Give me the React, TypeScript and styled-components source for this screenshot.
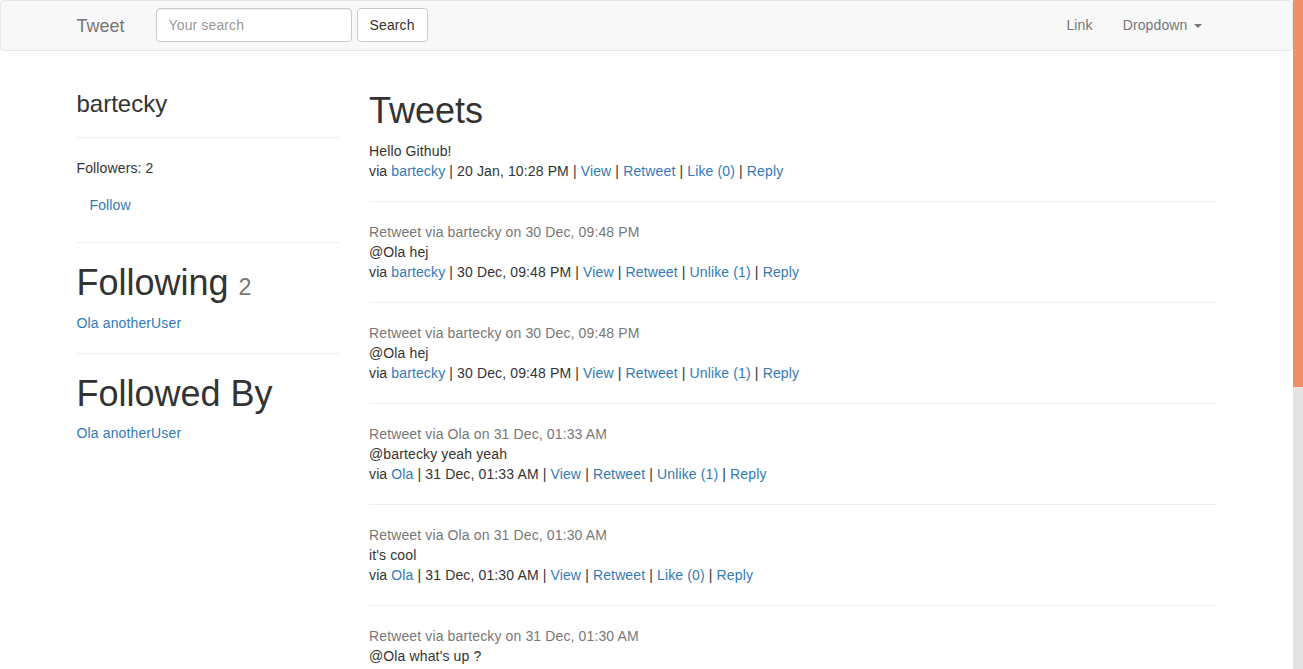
import React from "react";
import styled, { createGlobalStyle } from "styled-components";

const GlobalStyle = createGlobalStyle`
  html, body { margin: 0; padding: 0; height: 100%; overflow: hidden; }
  body {
    font-family: "Liberation Sans", Arial, Helvetica, sans-serif;
    font-size: 14px;
    line-height: 1.42857143;
    letter-spacing: 0.13px;
    color: #333;
    background: #fff;
  }
  * { box-sizing: border-box; }
`;

const Frame = styled.div`
  display: flex;
  height: 100vh;
`;

const Viewport = styled.div`
  flex: 1;
  min-width: 0;
  overflow: hidden;
`;

const ScrollTrack = styled.div`
  width: 10px;
  flex: none;
  background: #e3e3e3;
`;

const ScrollThumb = styled.div`
  width: 100%;
  background: #ef8f68;
`;

const Navbar = styled.nav`
  background: #f8f8f8;
  border: 1px solid #e7e7e7;
  border-radius: 4px;
  min-height: 51px;
  margin-bottom: 20px;
`;

const Container = styled.div`
  width: 1170px;
  margin: 0 auto;
  padding: 0 15px;
`;

const NavInner = styled(Container)`
  display: flex;
  align-items: flex-start;
  height: 49px;
`;

const Brand = styled.a`
  display: block;
  font-size: 18px;
  line-height: 20px;
  letter-spacing: 0;
  padding: 15px;
  margin-left: -15px;
  color: #777;
  text-decoration: none;
`;

const SearchForm = styled.form`
  display: flex;
  gap: 5px;
  margin: 7px 0 0 16px;
`;

const SearchInput = styled.input`
  width: 196px;
  height: 34px;
  padding: 6px 12px;
  font-family: inherit;
  font-size: 14px;
  letter-spacing: 0.13px;
  color: #555;
  border: 1px solid #ccc;
  border-radius: 4px;
  box-shadow: inset 0 1px 1px rgba(0, 0, 0, 0.075);
  outline: none;
  &::placeholder { color: #999; }
`;

const Button = styled.button`
  height: 34px;
  padding: 6px 12px;
  font-family: inherit;
  font-size: 14px;
  letter-spacing: 0.13px;
  line-height: 20px;
  color: #333;
  background: #fff;
  border: 1px solid #ccc;
  border-radius: 4px;
`;

const NavRight = styled.ul`
  display: flex;
  list-style: none;
  margin: 0 0 0 auto;
  padding: 0;
`;

const NavLink = styled.a`
  display: flex;
  align-items: center;
  padding: 14px 15px 15px;
  line-height: 20px;
  color: #777;
  text-decoration: none;
`;

const Caret = styled.span`
  display: inline-block;
  width: 0;
  height: 0;
  margin-left: 6px;
  margin-top: 1px;
  border-top: 4px solid #777;
  border-left: 4px solid transparent;
  border-right: 4px solid transparent;
`;

const Row = styled.div`
  display: flex;
  margin: 0 -15px;
`;

const Col = styled.div<{ $w: number }>`
  width: ${(p) => p.$w}px;
  padding: 0 15px;
  flex: none;
`;

const H3 = styled.h3`
  font-size: 24px;
  font-weight: 500;
  line-height: 26px;
  letter-spacing: 0;
  margin: 20px 0 0;
`;

const H1 = styled.h1`
  font-size: 36px;
  font-weight: 500;
  line-height: 1.1;
  letter-spacing: 0;
  margin: 20px 0 10px;
`;

const Small = styled.small`
  font-size: 65%;
  color: #777;
  font-weight: 400;
`;

const Hr = styled.hr`
  border: 0;
  border-top: 1px solid #eee;
  margin: 20px 0;
`;

const P = styled.p`
  margin: 0 0 10px;
`;

const Link = styled.a`
  color: #337ab7;
  text-decoration: none;
`;

const LinkButton = styled.a`
  display: inline-block;
  padding: 7px 13px;
  line-height: 20px;
  color: #337ab7;
  text-decoration: none;
`;

const TweetBox = styled.div`
  line-height: 20px;
`;

const RetweetInfo = styled.div`
  color: #777;
`;

const Line = styled.div``;

type Tweet = {
  header?: string;
  text: string;
  user: string;
  date: string;
  like: string;
};

const tweets: Tweet[] = [
  { text: "Hello Github!", user: "bartecky", date: "20 Jan, 10:28 PM", like: "Like (0)" },
  { header: "Retweet via bartecky on 30 Dec, 09:48 PM", text: "@Ola hej", user: "bartecky", date: "30 Dec, 09:48 PM", like: "Unlike (1)" },
  { header: "Retweet via bartecky on 30 Dec, 09:48 PM", text: "@Ola hej", user: "bartecky", date: "30 Dec, 09:48 PM", like: "Unlike (1)" },
  { header: "Retweet via Ola on 31 Dec, 01:33 AM", text: "@bartecky yeah yeah", user: "Ola", date: "31 Dec, 01:33 AM", like: "Unlike (1)" },
  { header: "Retweet via Ola on 31 Dec, 01:30 AM", text: "it's cool", user: "Ola", date: "31 Dec, 01:30 AM", like: "Like (0)" },
  { header: "Retweet via bartecky on 31 Dec, 01:30 AM", text: "@Ola what's up ?", user: "bartecky", date: "31 Dec, 01:30 AM", like: "Like (0)" },
];

const TweetItem: React.FC<{ t: Tweet }> = ({ t }) => (
  <TweetBox>
    {t.header && <RetweetInfo>{t.header}</RetweetInfo>}
    <Line>{t.text}</Line>
    <Line>
      via <Link href="#">{t.user}</Link> | {t.date} | <Link href="#">View</Link> |{" "}
      <Link href="#">Retweet</Link> | <Link href="#">{t.like}</Link> |{" "}
      <Link href="#">Reply</Link>
    </Line>
  </TweetBox>
);

export default function App() {
  const thumbHeight = 387;
  return (
    <Frame>
      <GlobalStyle />
      <Viewport>
        <Navbar>
          <NavInner>
            <Brand href="#">Tweet</Brand>
            <SearchForm onSubmit={(e) => e.preventDefault()}>
              <SearchInput placeholder="Your search" />
              <Button type="submit">Search</Button>
            </SearchForm>
            <NavRight>
              <li>
                <NavLink href="#">Link</NavLink>
              </li>
              <li>
                <NavLink href="#">
                  Dropdown <Caret />
                </NavLink>
              </li>
            </NavRight>
          </NavInner>
        </Navbar>
        <Container>
          <Row>
            <Col $w={292.5}>
              <H3>bartecky</H3>
              <Hr />
              <P>Followers: 2</P>
              <LinkButton href="#">Follow</LinkButton>
              <Hr />
              <H1>
                Following <Small>2</Small>
              </H1>
              <div>
                <Link href="#">Ola</Link> <Link href="#">anotherUser</Link>
              </div>
              <Hr />
              <H1>Followed By</H1>
              <div>
                <Link href="#">Ola</Link> <Link href="#">anotherUser</Link>
              </div>
            </Col>
            <Col $w={877.5}>
              <H1>Tweets</H1>
              {tweets.map((t, i) => (
                <React.Fragment key={i}>
                  {i > 0 && <Hr />}
                  <TweetItem t={t} />
                </React.Fragment>
              ))}
            </Col>
          </Row>
        </Container>
      </Viewport>
      <ScrollTrack>
        <ScrollThumb style={{ height: thumbHeight }} />
      </ScrollTrack>
    </Frame>
  );
}
